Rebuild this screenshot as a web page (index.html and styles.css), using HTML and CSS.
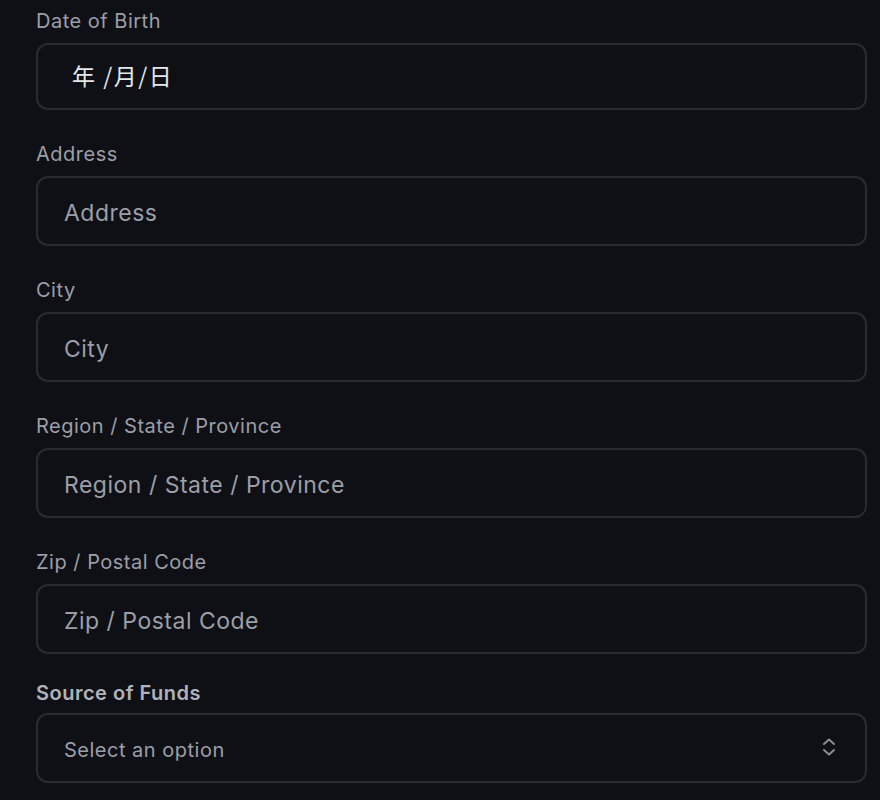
FILE: index.html
```html
<!DOCTYPE html>
<html lang="en">
<head>
    <meta charset="UTF-8">
    <meta name="viewport" content="width=device-width, initial-scale=1.0">
    <title>Personal details</title>
    <link rel="stylesheet" href="styles.css">
</head>
<body>

<form class="form">
    <div class="fields">
        <div class="field">
            <label class="label" for="dob">Date of Birth</label>
            <div class="input date" id="dob">年 /月/日</div>
        </div>
        <div class="field">
            <label class="label" for="address">Address</label>
            <input class="input" type="text" id="address" placeholder="Address">
        </div>
        <div class="field">
            <label class="label" for="city">City</label>
            <input class="input" type="text" id="city" placeholder="City">
        </div>
        <div class="field">
            <label class="label" for="region">Region / State / Province</label>
            <input class="input" type="text" id="region" placeholder="Region / State / Province">
        </div>
        <div class="field">
            <label class="label" for="zip">Zip / Postal Code</label>
            <input class="input" type="text" id="zip" placeholder="Zip / Postal Code">
        </div>
    </div>

    <div class="field funds">
        <label class="label strong" for="funds">Source of Funds</label>
        <div class="select-wrap">
            <select class="input select" id="funds">
                <option>Select an option</option>
            </select>
            <svg class="chevrons" viewBox="0 0 14 19" width="14" height="19">
                <polyline points="2,6 7,1.5 12,6"/>
                <polyline points="2,12 7,16.5 12,12"/>
            </svg>
        </div>
    </div>
</form>

</body>
</html>
```

FILE: styles.css
```css
body {
    margin: 0;
    background: #0f1015;
    font-family: Inter, "Noto Sans", sans-serif;
    overflow: hidden;
}
.form {
    padding: 5px 0 0 36px;
    width: 831px;
}
.fields {
    display: flex;
    flex-direction: column;
    gap: 28px;
}
.field {
    display: flex;
    flex-direction: column;
    gap: 8px;
}
.funds {
    margin-top: 23px;
    gap: 6px;
}
.label {
    padding-top: 2px;
    font-size: 20px;
    line-height: 28px;
    letter-spacing: 0.5px;
    color: #9c9ea8;
}
.label.strong {
    font-weight: 600;
    color: #b0b3bb;
}
.input {
    box-sizing: border-box;
    width: 100%;
    height: 70px;
    padding: 4px 26px 0;
    border: 2px solid #2a2b31;
    border-radius: 12px;
    background: #0f1015;
    font-family: Inter, "Noto Sans", sans-serif;
    font-size: 23px;
    letter-spacing: 0.5px;
    color: #e6e7ea;
    outline: none;
}
.input::placeholder {
    color: #9c9ea8;
}
.date {
    display: flex;
    align-items: center;
    height: 67px;
    padding: 0 0 3px 34px;
    font-family: "Noto Sans CJK SC", Inter, sans-serif;
    font-size: 23px;
    letter-spacing: 1.5px;
}
.select-wrap {
    position: relative;
}
.select {
    appearance: none;
    font-size: 20px;
    color: #9c9ea8;
}
.chevrons {
    position: absolute;
    right: 31px;
    top: 25px;
    fill: none;
    stroke: #8b8d96;
    stroke-width: 2;
    stroke-linecap: round;
    stroke-linejoin: round;
}
```
